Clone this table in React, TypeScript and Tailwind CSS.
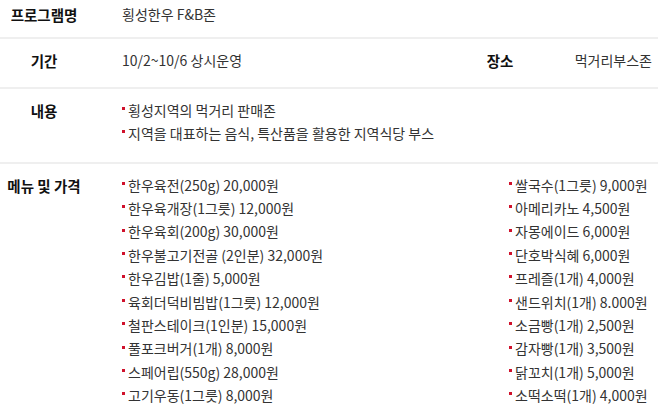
import React from 'react';

const leftMenu = [
  '한우육전(250g) 20,000원',
  '한우육개장(1그릇) 12,000원',
  '한우육회(200g) 30,000원',
  '한우불고기전골 (2인분) 32,000원',
  '한우김밥(1줄) 5,000원',
  '육회더덕비빔밥(1그릇) 12,000원',
  '철판스테이크(1인분) 15,000원',
  '풀포크버거(1개) 8,000원',
  '스페어립(550g) 28,000원',
  '고기우동(1그릇) 8,000원',
];

const rightMenu = [
  '쌀국수(1그릇) 9,000원',
  '아메리카노 4,500원',
  '자몽에이드 6,000원',
  '단호박식혜 6,000원',
  '프레즐(1개) 4,000원',
  '샌드위치(1개) 8.000원',
  '소금빵(1개) 2,500원',
  '감자빵(1개) 3,500원',
  '닭꼬치(1개) 5,000원',
  '소떡소떡(1개) 4,000원',
];

const Bullet: React.FC<{ text: string }> = ({ text }) => (
  <li className="flex items-center">
    <span className="w-[3px] h-[3px] bg-[#d0112b] mr-[3px] -translate-y-[2px] shrink-0"></span>
    <span>{text}</span>
  </li>
);

const Label: React.FC<{ children: React.ReactNode }> = ({ children }) => (
  <div className="w-[88px] text-center font-bold text-[#111] text-[14.5px] shrink-0">{children}</div>
);

export default function App() {
  return (
    <div
      className="w-[658px] h-[410px] bg-white overflow-hidden text-[14px] leading-[23.4px] text-[#333]"
      style={{ fontFamily: '"Noto Sans CJK KR", "Noto Sans", sans-serif' }}
    >
      <div className="flex pt-[3px] pb-[11px] border-b-2 border-[#efefef]">
        <Label>프로그램명</Label>
        <div className="ml-[34px]">횡성한우 F&amp;B존</div>
      </div>

      <div className="flex pt-[10px] pb-[14px] border-b-2 border-[#efefef]">
        <Label>기간</Label>
        <div className="ml-[34px] flex-1">10/2~10/6 상시운영</div>
        <div className="w-[30px] font-bold text-[#111] text-[14.5px] mr-[58px]">장소</div>
        <div className="pr-[6px]">먹거리부스존</div>
      </div>

      <div className="flex pt-[10px] pb-[16px] border-b-2 border-[#efefef]">
        <Label>내용</Label>
        <ul className="ml-[34px]">
          <Bullet text="횡성지역의 먹거리 판매존" />
          <Bullet text="지역을 대표하는 음식, 특산품을 활용한 지역식당 부스" />
        </ul>
      </div>

      <div className="flex pt-[10px]">
        <Label>메뉴 및 가격</Label>
        <div className="ml-[34px] grid grid-cols-[387px_1fr]">
          <ul>
            {leftMenu.map((m) => (
              <Bullet key={m} text={m} />
            ))}
          </ul>
          <ul>
            {rightMenu.map((m) => (
              <Bullet key={m} text={m} />
            ))}
          </ul>
        </div>
      </div>
    </div>
  );
}
